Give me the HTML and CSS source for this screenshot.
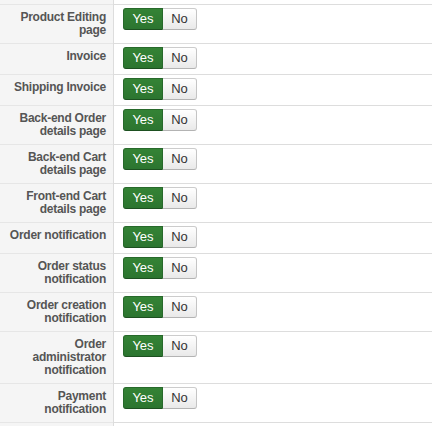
FILE: index.html
```html
<!DOCTYPE html>
<html>
<head>
    <meta charset="UTF-8">
    <meta name="viewport" content="width=device-width, initial-scale=1.0">
    <title>Parameters</title>
    <link rel="stylesheet" href="styles.css">
</head>
<body>
<table class="params">
    <tr class="cut-top">
        <td class="key"></td>
        <td class="value"></td>
    </tr>
    <tr>
        <td class="key">Product Editing page</td>
        <td class="value"><div class="yesno"><span class="btn yes">Yes</span><span class="btn no">No</span></div></td>
    </tr>
    <tr>
        <td class="key">Invoice</td>
        <td class="value"><div class="yesno"><span class="btn yes">Yes</span><span class="btn no">No</span></div></td>
    </tr>
    <tr>
        <td class="key">Shipping Invoice</td>
        <td class="value"><div class="yesno"><span class="btn yes">Yes</span><span class="btn no">No</span></div></td>
    </tr>
    <tr>
        <td class="key">Back-end Order details page</td>
        <td class="value"><div class="yesno"><span class="btn yes">Yes</span><span class="btn no">No</span></div></td>
    </tr>
    <tr>
        <td class="key">Back-end Cart details page</td>
        <td class="value"><div class="yesno"><span class="btn yes">Yes</span><span class="btn no">No</span></div></td>
    </tr>
    <tr>
        <td class="key">Front-end Cart details page</td>
        <td class="value"><div class="yesno"><span class="btn yes">Yes</span><span class="btn no">No</span></div></td>
    </tr>
    <tr>
        <td class="key">Order notification</td>
        <td class="value"><div class="yesno"><span class="btn yes">Yes</span><span class="btn no">No</span></div></td>
    </tr>
    <tr>
        <td class="key">Order status notification</td>
        <td class="value"><div class="yesno"><span class="btn yes">Yes</span><span class="btn no">No</span></div></td>
    </tr>
    <tr>
        <td class="key">Order creation notification</td>
        <td class="value"><div class="yesno"><span class="btn yes">Yes</span><span class="btn no">No</span></div></td>
    </tr>
    <tr>
        <td class="key">Order administrator notification</td>
        <td class="value"><div class="yesno"><span class="btn yes">Yes</span><span class="btn no">No</span></div></td>
    </tr>
    <tr>
        <td class="key">Payment notification</td>
        <td class="value"><div class="yesno"><span class="btn yes">Yes</span><span class="btn no">No</span></div></td>
    </tr>
    <tr class="cut-bottom">
        <td class="key"></td>
        <td class="value"></td>
    </tr>
</table>
</body>
</html>
```

FILE: styles.css
```css
body {
    margin: 0;
    background-color: #fff;
    font-family: "Liberation Sans", Arial, sans-serif;
    font-size: 12px;
}
.params {
    width: 100%;
    border-collapse: collapse;
}
.params td {
    border-top: 1px solid #ddd;
    vertical-align: top;
    padding: 0;
}
.params .key {
    width: 106px;
    padding: 6px 7px 6px 0;
    text-align: right;
    font-weight: bold;
    line-height: 13px;
    letter-spacing: -0.25px;
    color: #555;
    background-color: #f5f5f5;
    border-right: 1px solid #ddd;
    border-top-color: #e6e6e6;
}
.params .value {
    padding: 3px 10px 5px 9px;
}
.params .cut-top td {
    border-top: none;
    height: 4px;
    padding: 0;
}
.params .cut-bottom td {
    height: 3px;
    padding: 0;
}
.yesno {
    display: flex;
}
.btn {
    box-sizing: border-box;
    height: 22px;
    line-height: 20px;
    font-size: 13px;
    text-align: center;
    border: 1px solid;
}
.btn.yes {
    width: 40px;
    color: #fff;
    background: linear-gradient(#348335, #2c7530);
    border-color: #27692b #27692b #1d5020;
    border-radius: 3px 0 0 3px;
}
.btn.no {
    width: 34px;
    color: #333;
    background: linear-gradient(#fff, #e9e9e9);
    border-color: #ccc #c4c4c4 #b3b3b3;
    border-left: none;
    border-radius: 0 3px 3px 0;
}
```
